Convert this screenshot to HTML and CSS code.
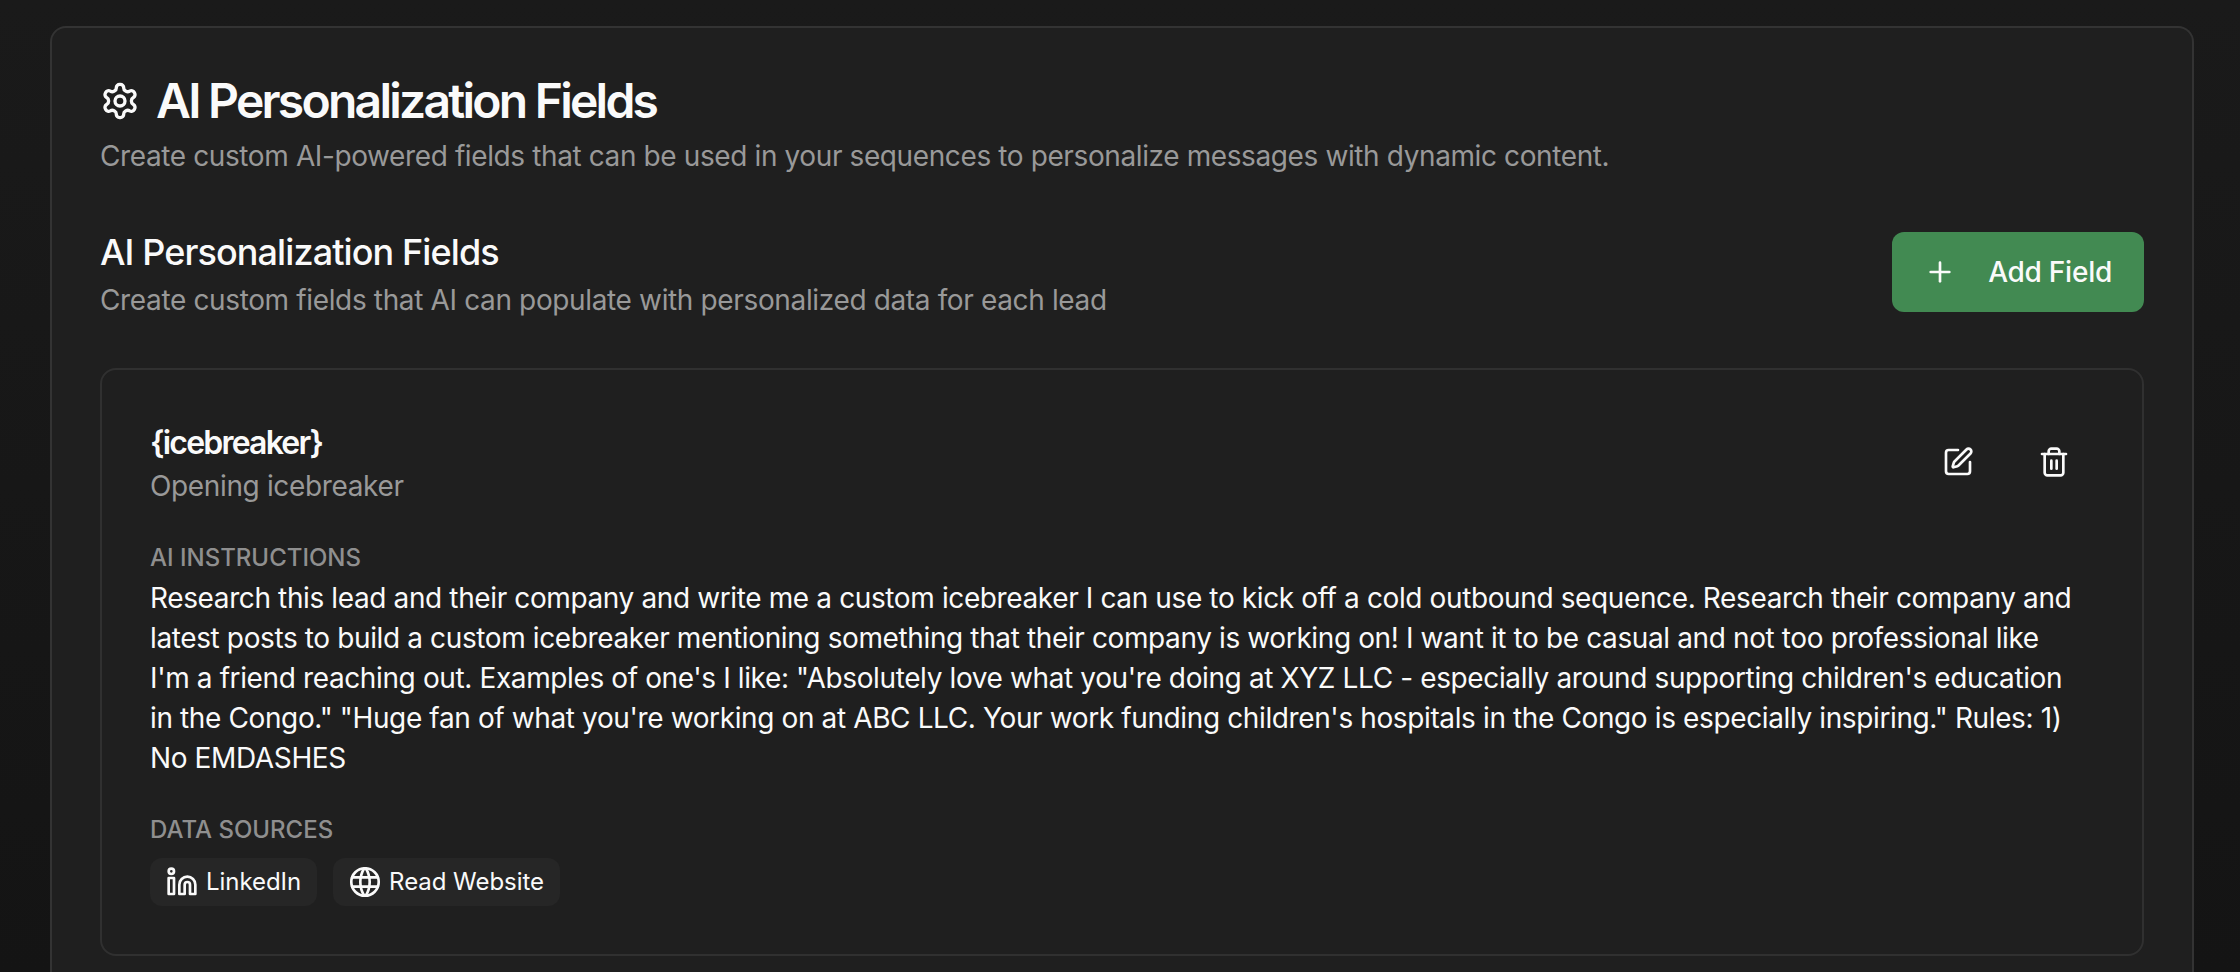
FILE: index.html
```html
<!DOCTYPE html>
<html lang="en">
  <head>
    <meta charset="UTF-8" />
    <title>AI Personalization Fields</title>
    <link rel="stylesheet" href="styles.css">
  </head>
  <body>
    <main class="panel">
      <header class="panel-head">
        <h1>
          <svg class="icon-lg" viewBox="0 0 24 24"><path d="M12.22 2h-.44a2 2 0 0 0-2 2v.18a2 2 0 0 1-1 1.73l-.43.25a2 2 0 0 1-2 0l-.15-.08a2 2 0 0 0-2.73.73l-.22.38a2 2 0 0 0 .73 2.73l.15.1a2 2 0 0 1 1 1.72v.51a2 2 0 0 1-1 1.74l-.15.09a2 2 0 0 0-.73 2.73l.22.38a2 2 0 0 0 2.73.73l.15-.08a2 2 0 0 1 2 0l.43.25a2 2 0 0 1 1 1.73V20a2 2 0 0 0 2 2h.44a2 2 0 0 0 2-2v-.18a2 2 0 0 1 1-1.73l.43-.25a2 2 0 0 1 2 0l.15.08a2 2 0 0 0 2.73-.73l.22-.39a2 2 0 0 0-.73-2.73l-.15-.08a2 2 0 0 1-1-1.74v-.5a2 2 0 0 1 1-1.74l.15-.09a2 2 0 0 0 .73-2.73l-.22-.38a2 2 0 0 0-2.73-.73l-.15.08a2 2 0 0 1-2 0l-.43-.25a2 2 0 0 1-1-1.73V4a2 2 0 0 0-2-2z"/><circle cx="12" cy="12" r="3"/></svg>
          AI Personalization Fields
        </h1>
        <p class="muted">Create custom AI-powered fields that can be used in your sequences to personalize messages with dynamic content.</p>
      </header>

      <section class="section-head">
        <div>
          <h2>AI Personalization Fields</h2>
          <p class="muted">Create custom fields that AI can populate with personalized data for each lead</p>
        </div>
        <button class="add-btn">
          <svg class="icon" viewBox="0 0 24 24"><path d="M5 12h14"/><path d="M12 5v14"/></svg>
          Add Field
        </button>
      </section>

      <article class="field-card">
        <div class="field-top">
          <div>
            <h3>{icebreaker}</h3>
            <p class="muted">Opening icebreaker</p>
          </div>
          <div class="actions">
            <button class="icon-btn">
              <svg class="icon" viewBox="0 0 24 24"><path d="M12 3H5a2 2 0 0 0-2 2v14a2 2 0 0 0 2 2h14a2 2 0 0 0 2-2v-7"/><path d="M18.375 2.625a1 1 0 0 1 3 3l-9.013 9.014a2 2 0 0 1-.853.505l-2.873.84a.5.5 0 0 1-.62-.62l.84-2.873a2 2 0 0 1 .506-.852z"/></svg>
            </button>
            <button class="icon-btn">
              <svg class="icon" viewBox="0 0 24 24"><path d="M3 6h18"/><path d="M19 6v14c0 1-1 2-2 2H7c-1 0-2-1-2-2V6"/><path d="M8 6V4c0-1 1-2 2-2h4c1 0 2 1 2 2v2"/><path d="M10 11v6"/><path d="M14 11v6"/></svg>
            </button>
          </div>
        </div>

        <div class="label label-first">AI Instructions</div>
        <p class="instructions">Research this lead and their company and write me a custom icebreaker I can use to kick off a cold outbound sequence. Research their company and latest posts to build a custom icebreaker mentioning something that their company is working on! I want it to be casual and not too professional like I'm a friend reaching out. Examples of one's I like: "Absolutely love what you're doing at XYZ LLC - especially around supporting children's education in the Congo." "Huge fan of what you're working on at ABC LLC. Your work funding children's hospitals in the Congo is especially inspiring." Rules: 1) No EMDASHES</p>

        <div class="label label-second">Data Sources</div>
        <div class="chips">
          <span class="chip">
            <svg class="icon" viewBox="0 0 24 24"><path d="M16 8a6 6 0 0 1 6 6v7h-4v-7a2 2 0 0 0-2-2 2 2 0 0 0-2 2v7h-4v-7a6 6 0 0 1 6-6z"/><rect x="2" y="9" width="4" height="12"/><circle cx="4" cy="4" r="2"/></svg>
            LinkedIn
          </span>
          <span class="chip">
            <svg class="icon icon-globe" viewBox="1.5 1.5 21 21"><circle cx="12" cy="12" r="9"/><path d="M3.6 9h16.8"/><path d="M3.6 15h16.8"/><path d="M11.5 3a17 17 0 0 0 0 18"/><path d="M12.5 3a17 17 0 0 1 0 18"/></svg>
            Read Website
          </span>
        </div>
      </article>
    </main>
  </body>
</html>
```

FILE: styles.css
```css
html,
body {
  height: 972px;
  overflow: hidden;
}
body {
  margin: 0;
  padding: 26px 46px 0 50px;
  box-sizing: border-box;
  background: linear-gradient(#1a1a1a, #141414);
  color: #fafafa;
  font-family: Inter, "Liberation Sans", sans-serif;
  font-size: 28px;
  line-height: 40px;
  letter-spacing: -0.36px;
}
h1,
h2,
h3,
p {
  margin: 0;
}
svg {
  fill: none;
  stroke: currentColor;
  stroke-width: 2;
  stroke-linecap: round;
  stroke-linejoin: round;
  flex: none;
}
.icon {
  width: 32px;
  height: 32px;
}
.icon-lg {
  width: 40px;
  height: 40px;
}
.icon-globe {
  stroke-width: 1.75;
}
.muted {
  color: #999;
}
.panel {
  background: #1f1f1f;
  border: 2px solid #333;
  border-bottom: none;
  border-radius: 16px 16px 0 0;
  padding: 48px;
  min-height: 1000px;
}
.panel-head p {
  letter-spacing: -0.39px;
}
h1 {
  display: flex;
  align-items: center;
  gap: 16px;
  font-size: 48px;
  line-height: 48px;
  font-weight: 600;
  letter-spacing: -2.75px;
  margin: 1px 0 11px;
}
.section-head {
  display: flex;
  justify-content: space-between;
  align-items: flex-start;
  margin-top: 52px;
}
h2 {
  font-size: 36px;
  line-height: 48px;
  font-weight: 500;
  letter-spacing: -0.9px;
  margin-bottom: 4px;
}
.add-btn {
  display: flex;
  align-items: center;
  gap: 32px;
  height: 80px;
  padding: 0 32px;
  margin-top: 4px;
  background: #428a52;
  color: #fafafa;
  border: none;
  border-radius: 12px;
  font: 500 28px Inter, sans-serif;
  letter-spacing: -0.25px;
}
.field-card {
  margin-top: 48px;
  border: 2px solid #303030;
  border-radius: 16px;
  padding: 48px;
}
.field-top {
  display: flex;
  justify-content: space-between;
  align-items: center;
}
h3 {
  font-size: 32px;
  line-height: 46px;
  font-weight: 600;
  letter-spacing: -1.8px;
  margin-top: 2px;
}
.actions {
  display: flex;
  gap: 16px;
}
.icon-btn {
  width: 80px;
  height: 80px;
  display: flex;
  align-items: center;
  justify-content: center;
  background: none;
  border: none;
  color: #fafafa;
}
.label {
  color: #8f8f8f;
  font-size: 24px;
  line-height: 32px;
  font-weight: 500;
  letter-spacing: 0;
  text-transform: uppercase;
  margin-bottom: 4px;
}
.label-first {
  margin-top: 36px;
}
.label-second {
  margin-top: 36px;
}
.instructions {
  padding-right: 16px;
  letter-spacing: -0.38px;
}
.chips {
  display: flex;
  gap: 16px;
  margin-top: 12px;
}
.chip {
  display: flex;
  align-items: center;
  gap: 8px;
  height: 48px;
  padding: 0 16px;
  background: #262626;
  border-radius: 12px;
  font-size: 24px;
  letter-spacing: -0.05px;
}
```
